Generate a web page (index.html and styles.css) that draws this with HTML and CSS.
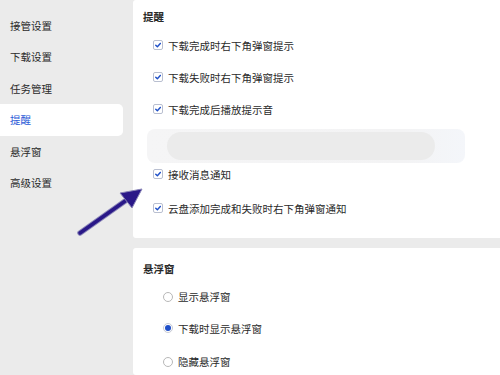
FILE: index.html
```html
<!DOCTYPE html>
<html lang="zh">
<head>
<meta charset="utf-8">
<link rel="stylesheet" href="styles.css">
</head>
<body>
<div class="app">
  <nav class="sidebar">
    <div class="nav-item">接管设置</div>
    <div class="nav-item">下载设置</div>
    <div class="nav-item">任务管理</div>
    <div class="nav-item active">提醒</div>
    <div class="nav-item">悬浮窗</div>
    <div class="nav-item">高级设置</div>
  </nav>
  <main class="content">
    <section class="card card-remind">
      <h2 class="title">提醒</h2>
      <label class="row"><span class="cb"><svg viewBox="0 0 10 10"><path d="M2.2 5.2 L4.2 7.1 L7.9 3" /></svg></span>下载完成时右下角弹窗提示</label>
      <label class="row"><span class="cb"><svg viewBox="0 0 10 10"><path d="M2.2 5.2 L4.2 7.1 L7.9 3" /></svg></span>下载失败时右下角弹窗提示</label>
      <label class="row"><span class="cb"><svg viewBox="0 0 10 10"><path d="M2.2 5.2 L4.2 7.1 L7.9 3" /></svg></span>下载完成后播放提示音</label>
      <div class="blur"><div class="blur-pill"></div></div>
      <label class="row row-short"><span class="cb"><svg viewBox="0 0 10 10"><path d="M2.2 5.2 L4.2 7.1 L7.9 3" /></svg></span>接收消息通知</label>
      <label class="row row-last"><span class="cb"><svg viewBox="0 0 10 10"><path d="M2.2 5.2 L4.2 7.1 L7.9 3" /></svg></span>云盘添加完成和失败时右下角弹窗通知</label>
    </section>
    <section class="card card-float">
      <h2 class="title">悬浮窗</h2>
      <label class="row radio-row"><span class="radio"></span>显示悬浮窗</label>
      <label class="row radio-row"><span class="radio on"></span>下载时显示悬浮窗</label>
      <label class="row radio-row radio-last"><span class="radio"></span>隐藏悬浮窗</label>
    </section>
  </main>
</div>
<svg class="arrow" width="80" height="60" viewBox="0 0 80 60">
  <path d="M4 56 L52 22" stroke="#8a86b8" stroke-width="5.5" stroke-linecap="round" fill="none"/>
  <path d="M4 56 L52 22" stroke="#2a1888" stroke-width="3.5" stroke-linecap="round" fill="none"/>
  <path d="M66 12 L44 16 L56 31 Z" fill="#2a1888" stroke="#8a86b8" stroke-width="1" stroke-linejoin="round"/>
</svg>
</body>
</html>
```
FILE: styles.css
```css
* { box-sizing: border-box; margin: 0; padding: 0; }
html, body { width: 500px; height: 375px; overflow: hidden; }
body {
  background: #ebebeb;
  font-family: "Noto Sans CJK SC", "Noto Sans", sans-serif;
  font-size: 10.5px;
  color: #2a2a2a;
  position: relative;
}
.app { display: flex; height: 375px; }
.sidebar {
  width: 133px;
  flex: none;
  padding-top: 10px;
  display: flex;
  flex-direction: column;
}
.nav-item {
  width: 123px;
  height: 31.4px;
  line-height: 31.4px;
  padding-left: 10px;
  border-radius: 0 5px 5px 0;
}
.nav-item.active {
  background: #fff;
  color: #2b5bd7;
}
.content {
  flex: 1;
  display: flex;
  flex-direction: column;
  gap: 10px;
  min-height: 0;
}
.card {
  background: #fff;
  padding-left: 10px;
  border-radius: 3px 0 0 3px;
}
.card-remind { flex: none; height: 238px; padding-top: 9px; }
.card-float { flex: 1 1 auto; min-height: 0; padding-top: 13px; overflow: hidden; }
.title {
  font-size: 10.5px;
  font-weight: 600;
  line-height: 16px;
  height: 16px;
  margin-bottom: 4px;
}
.row {
  display: flex;
  align-items: center;
  height: 32px;
  flex: none;
  padding-left: 10px;
}
.row-short { height: 22px; }
.row-last { margin-top: 7px; }
.cb {
  width: 10px; height: 10px;
  border: 1px solid #b9bfd0;
  border-radius: 2px;
  background: #fff;
  margin-right: 5px;
  display: flex;
}
.cb svg { width: 8px; height: 8px; }
.cb path { fill: none; stroke: #1f50c8; stroke-width: 1.8; stroke-linecap: round; stroke-linejoin: round; }
.blur {
  margin-top: 4px;
  margin-left: 4px;
  width: 318px;
  height: 34px;
  background: linear-gradient(90deg, #f5f5f6 0%, #f3f3f4 80%, #f4f6fa 100%);
  border-radius: 8px;
  padding: 3px 0 3px 20px;
}
.blur-pill {
  width: 268px;
  height: 28px;
  background: #ebebeb;
  border-radius: 14px;
}
.radio-row { padding-left: 20px; height: 31.5px; }
.radio-last { margin-top: 2px; }
.radio {
  width: 10px; height: 10px;
  border: 1px solid #b8b8b8;
  border-radius: 50%;
  margin-right: 5px;
  background: #fff;
  display: flex;
  align-items: center;
  justify-content: center;
}
.radio.on { border-color: #c8cbd4; }
.radio.on::after {
  content: "";
  width: 6px; height: 6px;
  border-radius: 50%;
  background: #1f4fc8;
}
.arrow { position: absolute; left: 76px; top: 177px; }
```
